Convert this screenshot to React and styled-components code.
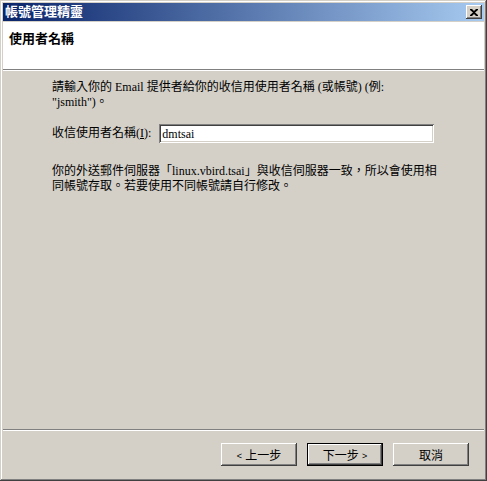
import React from 'react';
import styled, { createGlobalStyle } from 'styled-components';

const GlobalStyle = createGlobalStyle`
  html, body {
    margin: 0;
    padding: 0;
    background: #d4d0c8;
  }
`;

const FONT = `"Liberation Serif", "Noto Sans CJK TC", serif`;
const UI_FONT = `"Liberation Sans", "Noto Sans CJK TC", sans-serif`;

export default function App() {
  return (
    <>
      <GlobalStyle />
      <SWindow>
        <STitleBar>
          <STitle>帳號管理精靈</STitle>
          <SCloseBtn aria-label='Close'>
            <svg width='8' height='7' viewBox='0 0 8 7'>
              <path
                d='M0 0h2l2 2 2-2h2v1L5 3.5 8 6v1H6L4 5 2 7H0V6l3-2.5L0 1z'
                fill='#000'
              />
            </svg>
          </SCloseBtn>
        </STitleBar>

        <SHeader>
          <SHeaderTitle>使用者名稱</SHeaderTitle>
        </SHeader>

        <SBody>
          <SText>
            請輸入你的 Email 提供者給你的收信用使用者名稱 (或帳號) (例:
            <br />
            "jsmith")。
          </SText>

          <SField>
            <SLabel>
              收信使用者名稱(<u>I</u>):
            </SLabel>
            <SInput defaultValue='dmtsai' />
          </SField>

          <SText>
            你的外送郵件伺服器「linux.vbird.tsai」與收信伺服器一致，所以會使用相
            <br />
            同帳號存取。若要使用不同帳號請自行修改。
          </SText>
        </SBody>

        <SFooter>
          <SButton>
            <SArrow>&lt;</SArrow> 上一步
          </SButton>
          <SButton $default>
            下一步 <SArrow>&gt;</SArrow>
          </SButton>
          <SButton>取消</SButton>
        </SFooter>
      </SWindow>
    </>
  );
}

// Styled Components
const SWindow = styled.div`
  box-sizing: border-box;
  width: 487px;
  height: 481px;
  display: flex;
  flex-direction: column;
  padding: 3px;
  background: #d4d0c8;
  box-shadow: inset -1px -1px 0 #404040, inset 1px 1px 0 #d4d0c8,
    inset -2px -2px 0 #808080, inset 2px 2px 0 #ffffff;
`;

const STitleBar = styled.div`
  display: flex;
  align-items: center;
  justify-content: space-between;
  height: 18px;
  padding: 0 2px 0 2px;
  background: linear-gradient(to right, #0a246a, #a6caf0);
`;

const STitle = styled.span`
  color: #ffffff;
  font-family: ${UI_FONT};
  font-size: 13px;
  font-weight: bold;
  line-height: 18px;
`;

const SCloseBtn = styled.button`
  box-sizing: border-box;
  display: flex;
  align-items: center;
  justify-content: center;
  width: 16px;
  height: 14px;
  padding: 0;
  border: none;
  background: #d4d0c8;
  box-shadow: inset -1px -1px 0 #404040, inset 1px 1px 0 #ffffff,
    inset -2px -2px 0 #808080;
`;

const SHeader = styled.div`
  height: 48px;
  padding: 9px 6px 0;
  box-sizing: border-box;
  background: #ffffff;
  border-bottom: 1px solid #808080;
  box-shadow: 0 1px 0 #ffffff;
  margin-top: 1px;
  margin-bottom: 1px;
`;

const SHeaderTitle = styled.div`
  font-family: ${UI_FONT};
  font-size: 13px;
  font-weight: bold;
  line-height: 16px;
  color: #000000;
`;

const SBody = styled.div`
  flex: 1;
  display: flex;
  flex-direction: column;
  gap: 14px;
  padding: 9px 49px 0;
`;

const SText = styled.p`
  margin: 0;
  font-family: ${FONT};
  font-size: 12px;
  line-height: 15px;
  color: #000000;
  white-space: nowrap;
`;

const SField = styled.div`
  display: flex;
  align-items: center;
  gap: 8px;
  margin-bottom: 7px;
`;

const SLabel = styled.label`
  font-family: ${FONT};
  font-size: 12px;
  line-height: 15px;
  color: #000000;
  white-space: nowrap;
`;

const SInput = styled.input`
  box-sizing: border-box;
  width: 275px;
  height: 19px;
  padding: 1px 3px 0;
  border: none;
  outline: none;
  background: #ffffff;
  font-family: ${FONT};
  font-size: 12px;
  color: #000000;
  box-shadow: inset 1px 1px 0 #808080, inset -1px -1px 0 #ffffff,
    inset 2px 2px 0 #404040, inset -2px -2px 0 #d4d0c8;
`;

const SFooter = styled.div`
  display: flex;
  justify-content: flex-end;
  gap: 10px;
  height: 49px;
  box-sizing: border-box;
  padding: 13px 15px 0 0;
  border-top: 1px solid #808080;
  box-shadow: inset 0 1px 0 #ffffff;
`;

const SButton = styled.button`
  box-sizing: border-box;
  width: 76px;
  height: 23px;
  padding: 0;
  border: none;
  background: #d4d0c8;
  font-family: ${UI_FONT};
  font-size: 12px;
  color: #000000;
  box-shadow: ${({ $default }) =>
    $default
      ? 'inset 0 0 0 1px #000000, inset -2px -2px 0 #404040, inset 2px 2px 0 #ffffff, inset -3px -3px 0 #808080'
      : 'inset -1px -1px 0 #404040, inset 1px 1px 0 #ffffff, inset -2px -2px 0 #808080'};
`;

const SArrow = styled.span`
  font-size: 9px;
  vertical-align: 1px;
`;
